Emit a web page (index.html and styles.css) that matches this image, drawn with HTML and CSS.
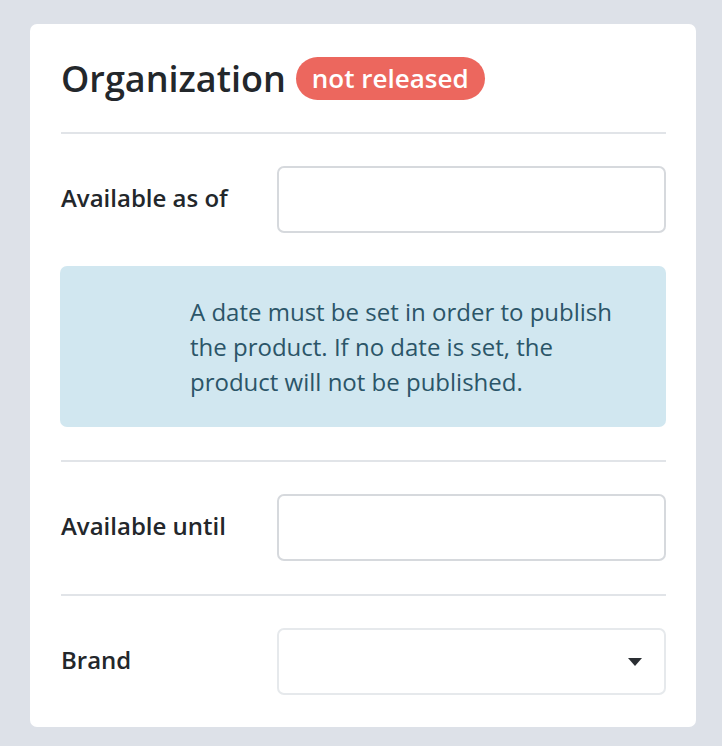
FILE: index.html
```html
<!DOCTYPE html>
<html lang="en">
<head>
<meta charset="utf-8">
<title>Organization</title>
<link rel="stylesheet" href="styles.css">
</head>
<body>
<div class="card">
  <div class="header">
    <h2 class="title">Organization</h2>
    <span class="badge">not released</span>
  </div>
  <div class="section">
    <div class="field">
      <label class="label">Available as of</label>
      <div class="input"></div>
    </div>
    <div class="info">A date must be set in order to publish the product. If no date is set, the product will not be published.</div>
  </div>
  <div class="section">
    <div class="field">
      <label class="label">Available until</label>
      <div class="input"></div>
    </div>
  </div>
  <div class="section last">
    <div class="field">
      <label class="label">Brand</label>
      <div class="input select">
        <svg class="caret" width="14" height="8" viewBox="0 0 14 8"><path d="M0 0H14L7 8Z" fill="#2a2e33"/></svg>
      </div>
    </div>
  </div>
</div>
</body>
</html>
```
FILE: styles.css
```css
* { box-sizing: border-box; }
html, body { margin: 0; }
body {
  background: #dde1e8;
  font-family: "Open Sans", "Liberation Sans", sans-serif;
  color: #23272b;
  padding: 24px 26px 20px 30px;
}
.card {
  width: 666px;
  background: #fff;
  border-radius: 7px;
  padding: 0 30px 32px 31px;
}
.header {
  display: flex;
  align-items: center;
  gap: 10px;
  padding: 33px 0 32px;
  border-bottom: 2px solid #e1e4e8;
}
.title {
  margin: 0;
  font-size: 36px;
  font-weight: 600;
  line-height: 43px;
  color: #23272b;
}
.badge {
  display: inline-block;
  background: #ec675e;
  color: #fff;
  font-size: 26px;
  font-weight: 600;
  line-height: 43px;
  height: 43px;
  padding: 0 16px;
  border-radius: 22px;
}
.section {
  padding: 32px 0 33px;
  border-bottom: 2px solid #e1e4e8;
}
.section.last { border-bottom: none; padding-bottom: 0; }
.field {
  display: flex;
  align-items: center;
}
.label {
  width: 216px;
  font-size: 24px;
  font-weight: 600;
  color: #23272b;
  margin-bottom: 4px;
}
.input {
  flex: 1;
  height: 67px;
  border: 2px solid #d6d9dd;
  border-radius: 7px;
  background: #fff;
}
.select {
  border-color: #e6e9ec;
  display: flex;
  align-items: center;
  justify-content: flex-end;
  padding-right: 22px;
}
.caret { display: block; }
.info {
  margin-top: 33px;
  margin-left: -1px;
  background: #d1e7f0;
  border-radius: 7px;
  padding: 28px 36px 28px 130px;
  font-size: 24px;
  line-height: 35px;
  color: #2b5568;
}
```
